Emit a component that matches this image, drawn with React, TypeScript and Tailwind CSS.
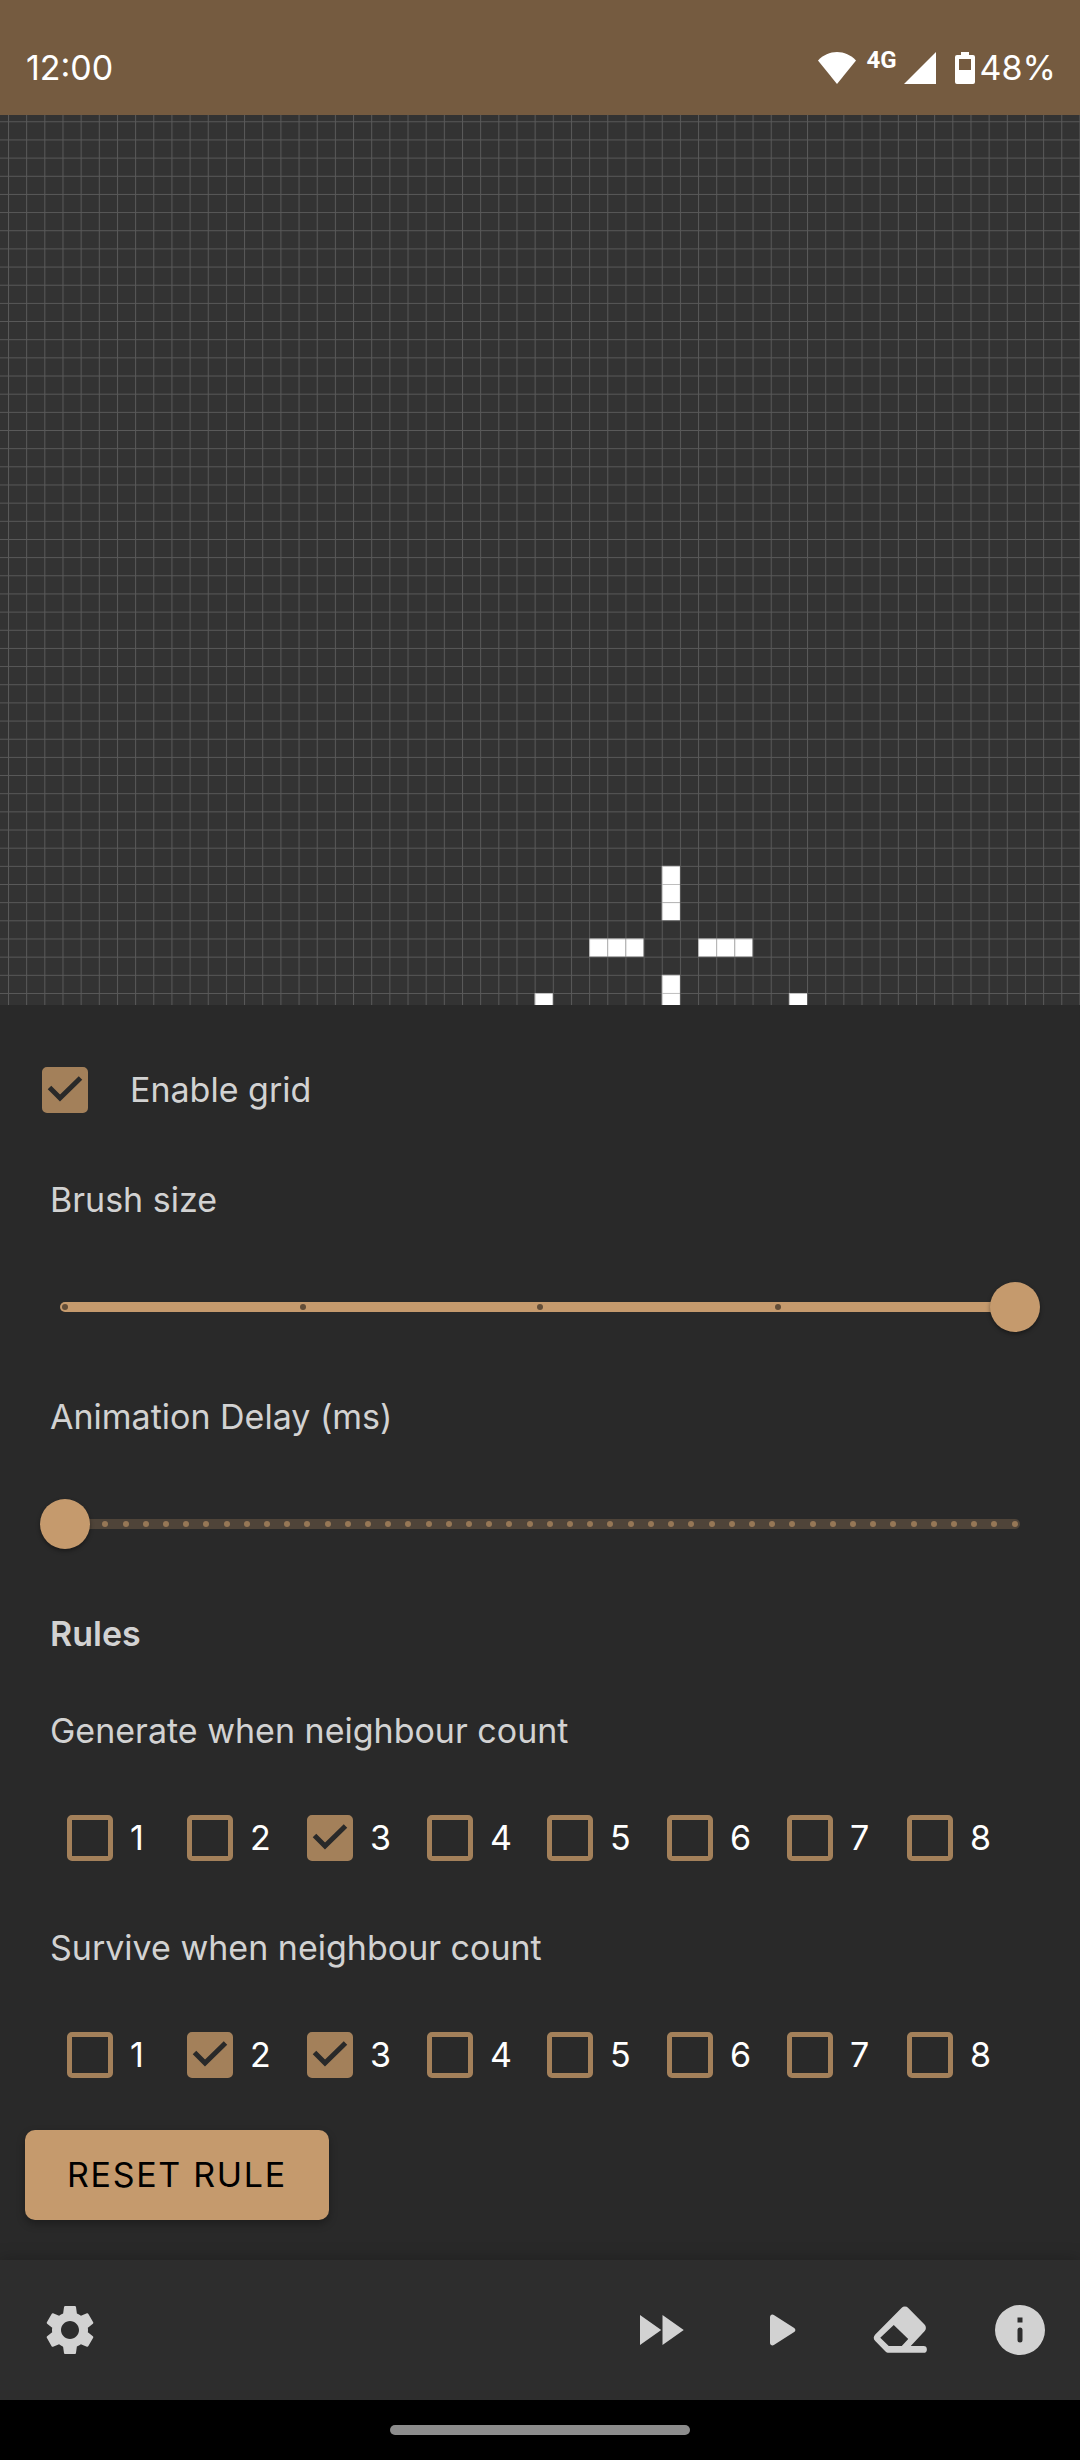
import { useId, useState, type ReactNode } from "react";
import { MdFastForward, MdSettings } from "react-icons/md";

const CELL = 18.16;
const ORIGIN_X = 8;
const ORIGIN_Y = 6.3;

// [column, row] of every living cell
const LIVE_CELLS: [number, number][] = [
  [36, 41], [36, 42], [36, 43],
  [32, 45], [33, 45], [34, 45],
  [38, 45], [39, 45], [40, 45],
  [36, 47], [36, 48],
  [29, 48], [43, 48],
];

const COUNTS = [1, 2, 3, 4, 5, 6, 7, 8];

function StatusBar() {
  return (
    <header className="flex h-[115px] items-center justify-between bg-[#755b40] pr-[24px] pl-[26px] pt-[20px] text-[34px] leading-[48px] text-white">
      <span>12:00</span>
      <div className="flex items-center">
        <svg className="mr-[10px] h-[32px] w-[38px]" viewBox="0 0 38 32" fill="currentColor" aria-hidden="true">
          <path d="M0 8.5C5 3 12 0 19 0s14 3 19 8.5L19 32z" />
        </svg>
        <span className="mr-[7px] mb-[16px] font-['Roboto'] text-[24px] leading-[24px] font-bold">4G</span>
        <svg className="mr-[19px] h-[32px] w-[32px]" viewBox="0 0 32 32" fill="currentColor" aria-hidden="true">
          <path d="M32 0v32H0z" />
        </svg>
        <svg className="mr-[5px] h-[32px] w-[20px]" viewBox="0 0 20 32" fill="currentColor" aria-hidden="true">
          <path fillRule="evenodd" d="M6 0h8v3h4a2 2 0 0 1 2 2v25a2 2 0 0 1-2 2H2a2 2 0 0 1-2-2V5a2 2 0 0 1 2-2h4zM4 7v11h12V7z" />
        </svg>
        <span>48%</span>
      </div>
    </header>
  );
}

function Board({ showGrid }: { showGrid: boolean }) {
  return (
    <main className="flex min-h-[400px] flex-1 bg-[#333333]">
      <svg className="h-auto w-full" role="img" aria-label="Game board">
        <defs>
          <pattern id="grid" x={ORIGIN_X} y={ORIGIN_Y} width={CELL} height={CELL} patternUnits="userSpaceOnUse">
            <path d={`M0 .5H${CELL}M.5 0V${CELL}`} stroke="#808080" strokeOpacity="0.5" strokeWidth="1" fill="none" />
          </pattern>
        </defs>
        {LIVE_CELLS.map(([col, row]) => (
          <rect
            key={`${col}-${row}`}
            x={ORIGIN_X + col * CELL}
            y={ORIGIN_Y + row * CELL}
            width={CELL}
            height={CELL}
            fill="#ffffff"
          />
        ))}
        {showGrid && <rect width="100%" height="100%" fill="url(#grid)" />}
      </svg>
    </main>
  );
}

type CheckboxProps = { id: string; checked: boolean; onChange: (checked: boolean) => void };

function Checkbox({ id, checked, onChange }: CheckboxProps) {
  return (
    <span className="grid h-[46px] w-[46px] shrink-0">
      <input
        id={id}
        type="checkbox"
        checked={checked}
        onChange={(e) => onChange(e.target.checked)}
        className="col-start-1 row-start-1 h-[46px] w-[46px] appearance-none rounded-[5px] border-5 border-[#a3805a] checked:bg-[#a3805a]"
      />
      {checked && (
        <svg className="pointer-events-none col-start-1 row-start-1" viewBox="0 0 46 46" fill="none" aria-hidden="true">
          <path d="M7.5 20.5L18 31L38.5 11" stroke="#292929" strokeWidth="5" />
        </svg>
      )}
    </span>
  );
}

type SliderProps = { label: string; steps: number; initial: number };

function StepSlider({ label, steps, initial }: SliderProps) {
  const id = useId();
  const [value, setValue] = useState(initial);
  const last = steps - 1;
  return (
    <div className="mb-[61px]">
      <label htmlFor={id} className="block px-[50px]">{label}</label>
      <div className="mx-[40px] mt-[58px] grid items-center">
        <div className="col-start-1 row-start-1 mx-[20px] grid h-[10px] overflow-hidden rounded-full bg-[#4f4439]">
          <div
            className="col-start-1 row-start-1 h-[10px] bg-[#c59a6d]"
            style={{ width: `${(value / last) * 100}%` }}
          />
          <div className="col-start-1 row-start-1 flex items-center justify-between px-[2px]">
            {Array.from({ length: steps }, (_, i) => (
              <span
                key={i}
                className={i <= value && value > 0 ? "h-[6px] w-[6px] rounded-full bg-[#624d38]" : "h-[6px] w-[6px] rounded-full bg-[#967756]"}
              />
            ))}
          </div>
        </div>
        <input
          id={id}
          type="range"
          min={0}
          max={last}
          value={value}
          onChange={(e) => setValue(Number(e.target.value))}
          className="col-start-1 row-start-1 h-[50px] w-full appearance-none bg-transparent [&::-webkit-slider-thumb]:h-[50px] [&::-webkit-slider-thumb]:w-[50px] [&::-webkit-slider-thumb]:appearance-none [&::-webkit-slider-thumb]:rounded-full [&::-webkit-slider-thumb]:bg-[#c59a6d] [&::-webkit-slider-thumb]:shadow-[0_2px_4px_rgba(0,0,0,0.4)]"
        />
      </div>
    </div>
  );
}

type RuleRowProps = { name: string; title: string; selected: number[]; onToggle: (count: number) => void };

function RuleRow({ name, title, selected, onToggle }: RuleRowProps) {
  return (
    <fieldset>
      <legend className="px-[50px]">{title}</legend>
      <div className="mt-[60px] grid grid-cols-8 px-[60px] text-white">
        {COUNTS.map((count) => (
          <div key={count} className="flex h-[46px] items-center gap-[17px] pl-[7px]">
            <Checkbox id={`${name}-${count}`} checked={selected.includes(count)} onChange={() => onToggle(count)} />
            <label htmlFor={`${name}-${count}`}>{count}</label>
          </div>
        ))}
      </div>
    </fieldset>
  );
}

function ToolButton({ label, children }: { label: string; children: ReactNode }) {
  return (
    <button type="button" aria-label={label} className="flex h-[140px] w-[120px] items-center justify-center">
      {children}
    </button>
  );
}

function toggle(list: number[], item: number) {
  return list.includes(item) ? list.filter((n) => n !== item) : [...list, item];
}

export default function App() {
  const [showGrid, setShowGrid] = useState(true);
  const [generate, setGenerate] = useState([3]);
  const [survive, setSurvive] = useState([2, 3]);

  return (
    <div className="flex min-h-screen flex-col bg-[#292929] font-['Inter','Noto_Sans',sans-serif] text-[34px] leading-[48px] text-[#d2d2d2]">
      <StatusBar />
      <Board showGrid={showGrid} />

      <section className="pt-[62px] pb-[40px]">
        <div className="mb-[63px] flex h-[46px] items-center gap-[42px] px-[42px]">
          <Checkbox id="enable-grid" checked={showGrid} onChange={setShowGrid} />
          <label htmlFor="enable-grid">Enable grid</label>
        </div>

        <StepSlider label="Brush size" steps={5} initial={4} />
        <StepSlider label="Animation Delay (ms)" steps={48} initial={0} />

        <h2 className="mb-[49px] px-[50px] font-semibold">Rules</h2>

        <div className="flex flex-col gap-[63px]">
          <RuleRow name="generate" title="Generate when neighbour count" selected={generate} onToggle={(n) => setGenerate(toggle(generate, n))} />
          <RuleRow name="survive" title="Survive when neighbour count" selected={survive} onToggle={(n) => setSurvive(toggle(survive, n))} />
        </div>

        <button
          type="button"
          onClick={() => {
            setGenerate([3]);
            setSurvive([2, 3]);
          }}
          className="mt-[52px] ml-[25px] block h-[90px] rounded-[10px] bg-[#c59a6d] px-[42px] tracking-wider text-black uppercase shadow-[0_4px_8px_rgba(0,0,0,0.3)]"
        >
          Reset rule
        </button>
      </section>

      <nav className="flex h-[140px] items-center bg-[#2d2d2d] pl-[10px] shadow-[0_0_16px_rgba(0,0,0,0.25)]">
        <ToolButton label="Settings">
          <MdSettings className="h-[60px] w-[60px]" />
        </ToolButton>
        <div className="ml-auto flex">
          <ToolButton label="Fast forward">
            <MdFastForward className="h-[60px] w-[60px]" />
          </ToolButton>
          <ToolButton label="Play">
            <svg className="h-[60px] w-[60px]" viewBox="0 0 24 24" fill="currentColor" aria-hidden="true">
              <path d="M8 6.82v10.36c0 .79.87 1.27 1.54.84l8.14-5.18a1 1 0 0 0 0-1.69L9.54 5.98A.998.998 0 0 0 8 6.82z" />
            </svg>
          </ToolButton>
          <ToolButton label="Erase">
            <svg className="h-[60px] w-[60px]" viewBox="0 0 24 24" fill="currentColor" aria-hidden="true">
              <path
                fillRule="evenodd"
                d="M12.6 3.2a1.9 1.9 0 0 1 2.7 0l6.5 6.6a1.9 1.9 0 0 1 0 2.7L16.3 18.4h5.1a1.35 1.35 0 0 1 0 2.7H7.5c-.5 0-1-.2-1.4-.6L2.1 16.4a1.9 1.9 0 0 1 0-2.6zM9.5 10L4.1 15.1l3.4 3.3h5.2l2.6-2.8z"
              />
            </svg>
          </ToolButton>
          <ToolButton label="About">
            <svg className="h-[60px] w-[60px]" viewBox="0 0 24 24" fill="currentColor" aria-hidden="true">
              <path
                fillRule="evenodd"
                d="M12 2a10 10 0 1 0 0 20a10 10 0 1 0 0-20zM11 7h2v2h-2zM12 11a1 1 0 0 1 1 1v4a1 1 0 0 1-2 0v-4a1 1 0 0 1 1-1z"
              />
            </svg>
          </ToolButton>
        </div>
      </nav>

      <footer className="flex h-[60px] items-center justify-center bg-black">
        <div className="h-[10px] w-[300px] rounded-full bg-[#8c8c8c]" />
      </footer>
    </div>
  );
}
